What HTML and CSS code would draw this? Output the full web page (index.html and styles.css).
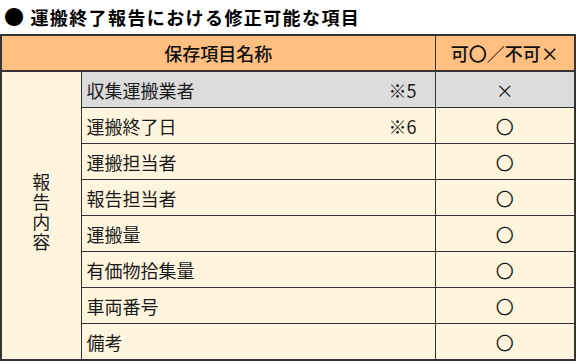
FILE: index.html
```html
<!DOCTYPE html>
<html lang="ja">
<head>
<meta charset="utf-8">
<link rel="stylesheet" href="styles.css">
</head>
<body>
<h1 class="title"><span class="bullet">●</span>運搬終了報告における修正可能な項目</h1>
<table class="items">
  <colgroup>
    <col class="c-cat">
    <col class="c-name">
    <col class="c-ok">
  </colgroup>
  <thead>
    <tr>
      <th colspan="2">保存項目名称</th>
      <th>可〇／不可×</th>
    </tr>
  </thead>
  <tbody>
    <tr class="ng">
      <td class="cat" rowspan="8"><span class="vert">報告内容</span></td>
      <td class="name"><span>収集運搬業者</span><span class="note">※5</span></td>
      <td class="mark">×</td>
    </tr>
    <tr>
      <td class="name"><span>運搬終了日</span><span class="note">※6</span></td>
      <td class="mark">〇</td>
    </tr>
    <tr><td class="name"><span>運搬担当者</span></td><td class="mark">〇</td></tr>
    <tr><td class="name"><span>報告担当者</span></td><td class="mark">〇</td></tr>
    <tr><td class="name"><span>運搬量</span></td><td class="mark">〇</td></tr>
    <tr><td class="name"><span>有価物拾集量</span></td><td class="mark">〇</td></tr>
    <tr><td class="name"><span>車両番号</span></td><td class="mark">〇</td></tr>
    <tr><td class="name"><span>備考</span></td><td class="mark">〇</td></tr>
  </tbody>
</table>
</body>
</html>
```
FILE: styles.css
```css
html, body {
  margin: 0;
  padding: 0;
  background: #fff;
}
body {
  font-family: "Noto Sans CJK JP", "Noto Sans", sans-serif;
  color: #1a1a1a;
}
.title {
  margin: 0;
  height: 34px;
  line-height: 34px;
  padding-left: 4px;
  font-size: 18px;
  font-weight: bold;
  letter-spacing: 1.4px;
  color: #000;
}
.bullet {
  font-size: 20px;
  margin-right: 5px;
}
.items {
  border-collapse: collapse;
  table-layout: fixed;
  width: 574px;
  border: 2px solid #333;
}
.c-cat { width: 80px; }
.c-name { width: 354px; }
.c-ok { width: 140px; }
.items th {
  background: #ffbf80;
  height: 34px;
  padding: 0;
  font-size: 18px;
  font-weight: 500;
  color: #111;
  text-align: center;
  border: 1px solid #333;
  border-bottom: 2px solid #333;
}
.items td {
  background: #fff5de;
  height: 35px;
  padding: 0;
  font-size: 18px;
  border: 1px solid #333;
}
.items tr.ng td.name,
.items tr.ng td.mark {
  background: #dcdcdc;
}
.cat {
  text-align: center;
  vertical-align: middle;
}
.vert {
  writing-mode: vertical-rl;
  text-orientation: upright;
  line-height: 20px;
  letter-spacing: 2px;
}
.items td.name {
  padding: 0 18px 0 5px;
}
.note {
  float: right;
}
.mark {
  text-align: center;
}
```
